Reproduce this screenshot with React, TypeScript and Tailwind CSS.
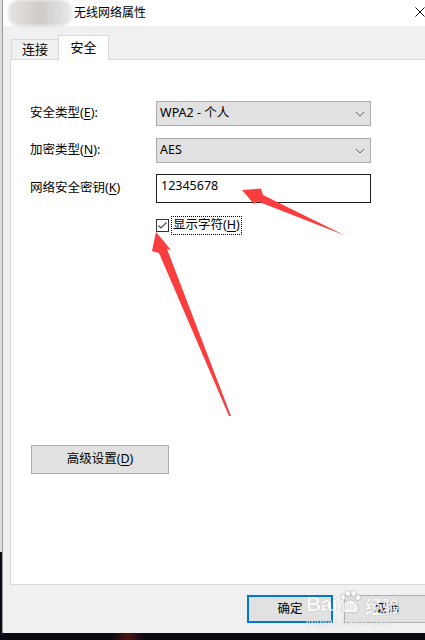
import React from "react";

const U = ({ children }: { children: React.ReactNode }) => (
  <span className="underline decoration-1 underline-offset-[2px]">{children}</span>
);

function Chevron() {
  return (
    <svg width="10" height="6" viewBox="0 0 10 6" className="shrink-0">
      <polyline points="1,1 5,5 9,1" fill="none" stroke="#606060" strokeWidth="1" />
    </svg>
  );
}

function Combo({ value }: { value: string }) {
  return (
    <div className="w-[215px] h-[25px] bg-[#e1e1e1] border border-[#adadad] flex items-center pl-[3px] pr-[5px]">
      <span className="flex-1 leading-none">{value}</span>
      <Chevron />
    </div>
  );
}

export default function App() {
  return (
    <div className="relative w-[425px] h-[640px] overflow-hidden bg-[#0a0a10] text-black text-[12.5px] font-['Noto_Sans','Noto_Sans_CJK_SC',sans-serif]">
      <div className="flex h-[633px]">
        {/* desktop edge */}
        <div className="w-[2px] flex flex-col shrink-0">
          <div className="h-[552px] bg-[#dcdcdc]" />
          <div className="flex-1 bg-[#0a0a10]" />
        </div>

        {/* window */}
        <div className="flex-1 min-w-0 flex flex-col border-l border-[#9c9c9c] overflow-hidden">
          {/* title bar */}
          <div className="h-[26px] bg-white flex items-center shrink-0">
            <div className="ml-[5px] w-[64px] h-[26px] rounded-[10px] bg-gradient-to-r from-[#e6e4e2] via-[#cfcbc8] to-[#e9e9e9] blur-[1.5px]" />
            <span className="ml-[2px] text-[12px] leading-none">无线网络属性</span>
            <svg width="10" height="10" viewBox="0 0 10 10" className="ml-auto mr-[0px] mb-[3px]">
              <path d="M0.5 0.5 L9.5 9.5 M9.5 0.5 L0.5 9.5" stroke="#111" strokeWidth="1" />
            </svg>
          </div>

          {/* body */}
          <div className="flex-1 bg-[#f0f0f0] pl-[7px] pt-[9px] flex flex-col">
            {/* tabs */}
            <div className="flex h-[25px] pl-[1px] -mb-[1px] relative z-10 shrink-0">
              <div className="mt-[4px] h-[21px] w-[47px] border-t border-l border-[#d9d9d9] flex items-center justify-center pb-[2px] text-[13px] leading-none">
                连接
              </div>
              <div className="h-[25px] w-[51px] bg-white border-x border-t border-[#d9d9d9] flex items-center justify-center pb-[2px] text-[13px] leading-none">
                安全
              </div>
            </div>

            {/* tab panel */}
            <div className="w-[430px] h-[526px] shrink-0 bg-white border border-[#d9d9d9] pt-[41px] pl-[19px] flex flex-col">
              <div className="flex items-center">
                <span className="w-[126px] leading-none">
                  安全类型(<U>E</U>):
                </span>
                <Combo value="WPA2 - 个人" />
              </div>
              <div className="flex items-center mt-[12px]">
                <span className="w-[126px] leading-none">
                  加密类型(<U>N</U>):
                </span>
                <Combo value="AES" />
              </div>
              <div className="flex items-center mt-[11px]">
                <span className="w-[126px] leading-none">
                  网络安全密钥(<U>K</U>)
                </span>
                <div className="w-[215px] h-[29px] bg-white border border-[#1f1f1f] flex items-center pl-[4px] pb-[5px]">
                  <span className="leading-none">12345678</span>
                </div>
              </div>
              <div className="flex items-center mt-[13px] h-[19px]">
                <div className="ml-[126px] w-[13px] h-[13px] border border-[#333] bg-white flex items-center justify-center shrink-0">
                  <svg width="11" height="11" viewBox="0 0 11 11">
                    <polyline points="1.5,5.5 4,8 9.5,2.5" fill="none" stroke="#4a4a4a" strokeWidth="1.2" />
                  </svg>
                </div>
                <div className="ml-[2px] h-[19px] px-[1px] border border-dotted border-black flex items-center">
                  <span className="leading-none">
                    显示字符(<U>H</U>)
                  </span>
                </div>
              </div>

              <button className="mt-[210px] ml-[1px] w-[138px] h-[29px] bg-[#e1e1e1] border border-[#adadad] flex items-center justify-center leading-none">
                高级设置(<U>D</U>)
              </button>
            </div>

            {/* dialog buttons */}
            <div className="flex mt-[10px] ml-[237px] shrink-0">
              <button className="w-[86px] h-[28px] shrink-0 bg-[#e1e1e1] border-2 border-[#0078d7] flex items-center justify-center leading-none">
                确定
              </button>
              <button className="ml-[11px] w-[86px] h-[28px] shrink-0 bg-[#e1e1e1] border border-[#adadad] flex items-center justify-center leading-none">
                取消
              </button>
            </div>
          </div>
        </div>
      </div>

      {/* desktop below the window */}
      <div className="h-[7px] flex">
        <div className="ml-[112px] w-[32px] h-[7px] bg-gradient-to-r from-transparent via-[#4a1414] to-transparent" />
      </div>

      {/* annotation arrows */}
      <svg className="absolute inset-0 pointer-events-none" width="425" height="640" viewBox="0 0 425 640">
        <polygon
          points="242,190 261,188.5 263,195 345,235.5 258,201.5 254,204"
          fill="#fa3d3d"
        />
        <polygon
          points="156,232 171,250 167,249 231,416 229,416 159,253 152,251"
          fill="#fa3d3d"
        />
      </svg>

      {/* watermark */}
      <div className="absolute left-[306px] top-[590px] flex flex-col items-start text-white opacity-80 [text-shadow:0_0_1px_#8a8a8a] pointer-events-none">
        <div className="flex items-end leading-none">
          <span className="text-[21px] font-bold font-['Liberation_Sans',sans-serif] tracking-[-0.5px]">Bai</span>
          <div className="relative w-[24px] h-[24px] ml-[1px]">
            <svg width="24" height="24" viewBox="0 0 24 24" className="absolute inset-0">
              <g fill="white" stroke="#a0a0a0" strokeWidth="0.6">
                <ellipse cx="5" cy="7" rx="2.6" ry="3.2" />
                <ellipse cx="10" cy="3.5" rx="2.6" ry="3.2" />
                <ellipse cx="15.5" cy="3.5" rx="2.6" ry="3.2" />
                <ellipse cx="20" cy="7.5" rx="2.6" ry="3.2" />
                <path d="M12 10 C7 10 3 16 4 20 C5 23.5 9 22.5 12 22.5 C15 22.5 19 23.5 20 20 C21 16 17 10 12 10 Z" />
              </g>
            </svg>
            <span className="absolute left-[4px] top-[11px] text-[11px] font-bold text-white font-['Liberation_Sans',sans-serif]">du</span>
          </div>
          <span className="ml-[3px] text-[17px] font-bold font-['Noto_Sans_CJK_SC',sans-serif]">经验</span>
        </div>
        <span className="mt-[3px] text-[9.5px] leading-none tracking-[0.4px] font-['Liberation_Sans',sans-serif]">jingyan.baidu.com</span>
      </div>
    </div>
  );
}
